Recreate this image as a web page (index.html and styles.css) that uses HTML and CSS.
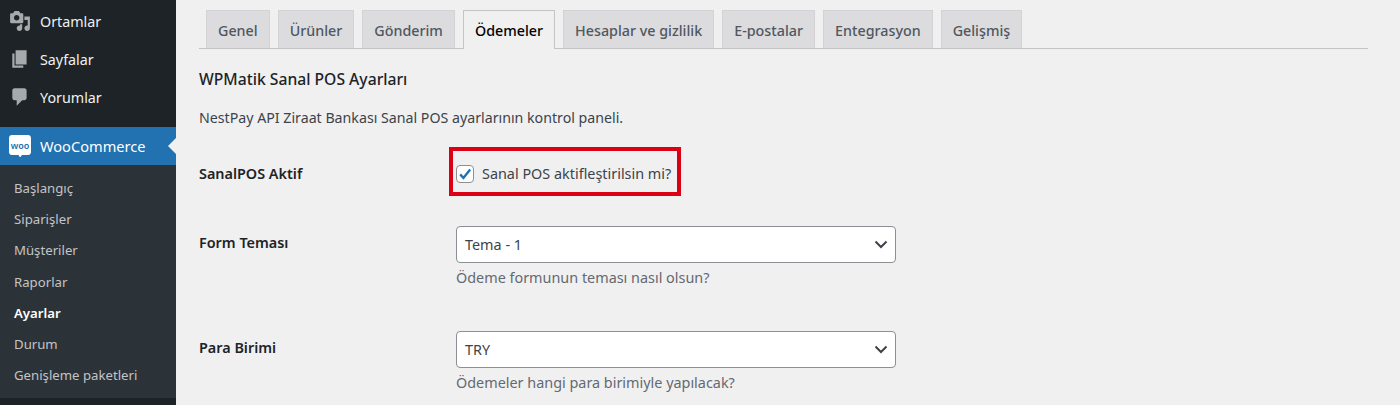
FILE: index.html
```html
<!DOCTYPE HTML>
<html>

<head>
  <meta charset="utf-8">
  <link rel="stylesheet" href="styles.css">
</head>

<body>
  <div class="page">

    <div class="sidebar">
      <ul class="menu">
        <li class="menu-item">
          <svg class="icon" viewBox="0 0 20 20"><path d="M13 11V4c0-.55-.45-1-1-1h-1.67L9 1H5L3.67 3H2c-.55 0-1 .45-1 1v7c0 .55.45 1 1 1h10c.55 0 1-.45 1-1zM7 4.5c1.38 0 2.5 1.12 2.5 2.5S8.38 9.5 7 9.5 4.5 8.38 4.5 7 5.62 4.5 7 4.5zM14 6h5v10.5c0 1.38-1.12 2.5-2.5 2.5S14 17.88 14 16.5s1.12-2.5 2.5-2.5c.17 0 .34.02.5.05V9h-3V6zm-4 8.05V13h2v3.5c0 1.38-1.12 2.5-2.5 2.5S7 17.88 7 16.5 8.12 14 9.5 14c.17 0 .34.02.5.05z"/></svg>
          Ortamlar
        </li>
        <li class="menu-item">
          <svg class="icon" viewBox="0 0 20 20"><path d="M6 15V2h10v13H6zm-1 1h8v2H3V5h2v11z"/></svg>
          Sayfalar
        </li>
        <li class="menu-item">
          <svg class="icon" viewBox="0 0 20 20"><path d="M5 2h9c1.1 0 2 .9 2 2v7c0 1.1-.9 2-2 2h-2l-5 5v-5H5c-1.1 0-2-.9-2-2V4c0-1.1.9-2 2-2z"/></svg>
          Yorumlar
        </li>
        <li class="menu-item current">
          <svg class="icon" viewBox="0 0 22 22">
            <path fill="#fff" d="M3 0h16c1.7 0 3 1.3 3 3v14c0 1.700-1.300 3-3 3h-6l-2 2.500L9.500 20H3c-1.700 0-3-1.300-3-3V3c0-1.700 1.300-3 3-3z"/>
            <text x="11" y="13.500" class="woo-text">woo</text>
          </svg>
          WooCommerce
        </li>
      </ul>
      <ul class="submenu">
        <li>Başlangıç</li>
        <li>Siparişler</li>
        <li>Müşteriler</li>
        <li>Raporlar</li>
        <li class="active">Ayarlar</li>
        <li>Durum</li>
        <li>Genişleme paketleri</li>
      </ul>
    </div>

    <div class="content">
      <div class="tabs">
        <div class="tab">Genel</div>
        <div class="tab">Ürünler</div>
        <div class="tab">Gönderim</div>
        <div class="tab selected">Ödemeler</div>
        <div class="tab">Hesaplar ve gizlilik</div>
        <div class="tab">E-postalar</div>
        <div class="tab">Entegrasyon</div>
        <div class="tab">Gelişmiş</div>
      </div>

      <h2>WPMatik Sanal POS Ayarları</h2>
      <p class="intro">NestPay API Ziraat Bankası Sanal POS ayarlarının kontrol paneli.</p>

      <div class="row row-check">
        <div class="label">SanalPOS Aktif</div>
        <div class="field">
          <div class="check-line">
            <span class="checkbox">
              <svg viewBox="0 0 20 20"><path d="M4 10.500l4 4.500 8.500-10.500" /></svg>
            </span>
            Sanal POS aktifleştirilsin mi?
            <div class="highlight"></div>
          </div>
        </div>
      </div>

      <div class="row row-theme">
        <div class="label label-select">Form Teması</div>
        <div class="field">
          <div class="select">
            Tema - 1
            <svg viewBox="0 0 14 9"><path d="M1.500 1.500L7 7l5.500-5.500" /></svg>
          </div>
          <p class="help">Ödeme formunun teması nasıl olsun?</p>
        </div>
      </div>

      <div class="row row-currency">
        <div class="label label-select">Para Birimi</div>
        <div class="field">
          <div class="select">
            TRY
            <svg viewBox="0 0 14 9"><path d="M1.500 1.500L7 7l5.500-5.500" /></svg>
          </div>
          <p class="help">Ödemeler hangi para birimiyle yapılacak?</p>
        </div>
      </div>
    </div>

  </div>
</body>
</html>
```

FILE: styles.css
```css
html, body {
  margin: 0;
  height: 405px;
  overflow: hidden;
}
body {
  background: #f0f0f1;
  font-family: "Noto Sans", "Open Sans", sans-serif;
  font-size: 14.4px;
  color: #3c434a;
}
ul {
  margin: 0;
  padding: 0;
  list-style: none;
}
.page {
  display: flex;
  height: 405px;
}

/* sidebar */
.sidebar {
  width: 176px;
  flex-shrink: 0;
  background: #1d2327;
  color: #f0f0f1;
}
.menu {
  padding-top: 2px;
}
.menu-item {
  position: relative;
  display: flex;
  align-items: center;
  gap: 9px;
  height: 38px;
  padding-left: 9px;
  font-size: 14.3px;
}
.menu-item .icon {
  width: 22px;
  height: 22px;
  fill: #a7aaad;
}
.menu-item.current {
  margin-top: 11px;
  background: #2271b1;
  color: #fff;
  font-size: 14.6px;
}
.menu-item.current::after {
  content: "";
  position: absolute;
  right: 0;
  top: 11px;
  border: 8px solid transparent;
  border-left: 0;
  border-right-color: #f0f0f1;
}
.woo-text {
  font-family: "Noto Sans", sans-serif;
  font-size: 9px;
  font-weight: 600;
  text-anchor: middle;
  fill: #2271b1;
}
.submenu {
  height: 233px;
  padding-top: 8px;
  box-sizing: border-box;
  background: #2c3338;
  color: #c3c4c7;
  font-size: 13.2px;
}
.submenu li {
  height: 31.2px;
  line-height: 31px;
  padding-left: 14px;
}
.submenu .active {
  color: #fff;
  font-weight: 600;
}

/* main area */
.content {
  flex: 1;
  padding: 10px 32px 0 23px;
}
.tabs {
  display: flex;
  gap: 8px;
  padding-left: 7px;
  height: 38px;
  border-bottom: 1px solid #c3c4c7;
}
.tab {
  height: 38px;
  padding: 0 11px;
  line-height: 40px;
  background: #dcdcde;
  color: #50575e;
  font-size: 14.3px;
  font-weight: 500;
  box-sizing: border-box;
  border: 1px solid #d3d3d5;
  border-bottom: 0;
}
.tab.selected {
  height: 39px;
  background: #f0f0f1;
  color: #000;
  border-color: #c3c4c7;
}
h2 {
  margin: 18px 0 0;
  font-size: 15.7px;
  line-height: 24px;
  font-weight: 500;
  color: #1d2327;
}
.intro {
  margin: 17px 0 0;
  line-height: 20px;
  font-size: 14.2px;
}
.row {
  display: flex;
}
.label {
  width: 257px;
  flex-shrink: 0;
  font-weight: 600;
  color: #1d2327;
}
.label-select {
  padding-top: 6.5px;
}
.row-check {
  margin-top: 35px;
  line-height: 22px;
}
.row-theme {
  margin-top: 41px;
}
.row-currency {
  margin-top: 43px;
}
.check-line {
  position: relative;
  display: flex;
  align-items: center;
  gap: 8px;
  height: 22px;
}
.checkbox {
  width: 16px;
  height: 16px;
  background: #fff;
  border: 1px solid #8c8f94;
  border-radius: 4px;
}
.checkbox svg {
  display: block;
  fill: none;
  stroke: #2271b1;
  stroke-width: 3;
}
.highlight {
  position: absolute;
  left: -7px;
  top: -16px;
  width: 224px;
  height: 41px;
  border: 4px solid #dc0014;
}
.select {
  display: flex;
  align-items: center;
  justify-content: space-between;
  width: 440px;
  height: 37px;
  padding: 0 7px 0 8px;
  box-sizing: border-box;
  background: #fff;
  border: 1px solid #8c8f94;
  border-radius: 4px;
}
.select svg {
  width: 14px;
  height: 9px;
  fill: none;
  stroke: #3c434a;
  stroke-width: 2;
}
.help {
  margin: 5px 0 0;
  line-height: 20px;
  color: #646970;
}
```
